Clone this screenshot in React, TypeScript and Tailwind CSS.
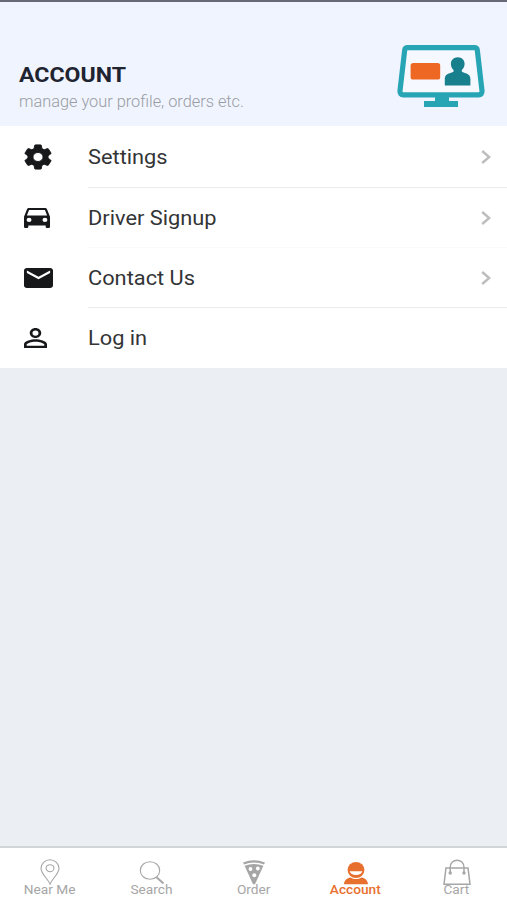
import type { ReactNode } from "react";

const MENU: { label: string; viewBox: string; size: string; path: string; arrow: boolean }[] = [
  {
    label: "Settings",
    viewBox: "2 1.7 20 20.6",
    size: "w-[28px] h-[26px] stroke-[#17181a] stroke-[0.7]",
    path: "M19.14 12.94c.04-.3.06-.61.06-.94 0-.32-.02-.64-.07-.94l2.03-1.58c.18-.14.23-.41.12-.61l-1.92-3.32c-.12-.22-.37-.29-.59-.22l-2.39.96c-.5-.38-1.03-.7-1.62-.94l-.36-2.54c-.04-.24-.24-.41-.48-.41h-3.84c-.24 0-.43.17-.47.41l-.36 2.54c-.59.24-1.13.57-1.62.94l-2.39-.96c-.22-.08-.47 0-.59.22L2.74 8.87c-.12.21-.08.47.12.61l2.03 1.58c-.05.3-.09.63-.09.94s.02.64.07.94l-2.03 1.58c-.18.14-.23.41-.12.61l1.92 3.32c.12.22.37.29.59.22l2.39-.96c.5.38 1.03.7 1.62.94l.36 2.54c.05.24.24.41.48.41h3.84c.24 0 .44-.17.47-.41l.36-2.54c.59-.24 1.13-.56 1.62-.94l2.39.96c.22.08.47 0 .59-.22l1.92-3.32c.12-.22.07-.47-.12-.61l-2.01-1.58zM12 15.6c-1.98 0-3.6-1.62-3.6-3.6s1.62-3.6 3.6-3.6 3.6 1.62 3.6 3.6-1.62 3.6-3.6 3.6z",
    arrow: true,
  },
  {
    label: "Driver Signup",
    viewBox: "3 5 18 16",
    size: "w-[26px] h-[20px]",
    path: "M18.92 6.01C18.72 5.42 18.16 5 17.5 5h-11c-.66 0-1.21.42-1.42 1.01L3 12v8c0 .55.45 1 1 1h1c.55 0 1-.45 1-1v-1h12v1c0 .55.45 1 1 1h1c.55 0 1-.45 1-1v-8l-2.08-5.99zM6.5 16.2a1.7 1.7 0 1 1 0-3.4 1.7 1.7 0 0 1 0 3.4zm11 0a1.7 1.7 0 1 1 0-3.4 1.7 1.7 0 0 1 0 3.4zM5 11l1.5-4.5h11L19 11H5z",
    arrow: true,
  },
  {
    label: "Contact Us",
    viewBox: "2 4 20 16",
    size: "w-[29px] h-[20px]",
    path: "M20 4H4c-1.1 0-1.99.9-1.99 2L2 18c0 1.1.9 2 2 2h16c1.1 0 2-.9 2-2V6c0-1.1-.9-2-2-2zm0 4l-8 5-8-5V6l8 5 8-5v2z",
    arrow: true,
  },
  {
    label: "Log in",
    viewBox: "4 4 16 16",
    size: "w-[23px] h-[20px]",
    path: "M12 5.9a2.1 2.1 0 1 1 0 4.2 2.1 2.1 0 0 1 0-4.2m0 9c2.97 0 6.1 1.46 6.1 2.1v1.1H5.9V17c0-.64 3.13-2.1 6.1-2.1M12 4C9.79 4 8 5.79 8 8s1.79 4 4 4 4-1.79 4-4-1.79-4-4-4zm0 9c-2.67 0-8 1.34-8 4v3h16v-3c0-2.66-5.33-4-8-4z",
    arrow: false,
  },
];

const TABS: { label: string; icon: ReactNode; active?: boolean }[] = [
  { label: "Near Me", icon: <PinIcon /> },
  { label: "Search", icon: <SearchIcon /> },
  { label: "Order", icon: <PizzaIcon /> },
  { label: "Account", icon: <AccountIcon />, active: true },
  { label: "Cart", icon: <BagIcon /> },
];

export default function App() {
  return (
    <div className="flex h-[900px] w-[507px] flex-col overflow-hidden bg-[#ebeef2] font-['Roboto',sans-serif]">
      <header className="flex h-[126px] shrink-0 justify-between border-t-2 border-[#676a76] bg-[#f0f4fe] pl-[19px] pr-[22px]">
        <div className="pt-[60px]">
          <h1 className="w-fit origin-left scale-x-[1.1] text-[21px] font-bold leading-[26px] text-[#202330]">
            ACCOUNT
          </h1>
          <p className="w-fit origin-left scale-x-[1.02] text-[16px] font-light leading-[27px] text-[#999ca4]">
            manage your profile, orders etc.
          </p>
        </div>
        <MonitorIcon />
      </header>

      <ul className="shrink-0 bg-white">
        {MENU.map((item, i) => (
          <li key={item.label} className={`flex items-stretch ${i === 0 ? "h-[62px]" : "h-[60px]"}`}>
            <div className="flex w-[88px] items-center pb-[1px] pl-[24px]">
              <svg
                viewBox={item.viewBox}
                preserveAspectRatio="none"
                className={`${item.size} fill-[#17181a]`}
              >
                <path d={item.path} />
              </svg>
            </div>
            <div
              className={`flex flex-1 items-center justify-between border-b pr-[16px] ${i === MENU.length - 1 ? "border-transparent" : i === 1 ? "border-[#fafafa]" : "border-[#ebebeb]"}`}
            >
              <span className="origin-left scale-x-[1.09] text-[20px] leading-[24px] text-[#333436]">
                {item.label}
              </span>
              {item.arrow && (
                <svg viewBox="0 0 10 14" className="mt-[1px] h-[14px] w-[10px]">
                  <path d="M1.2 1 8.2 7l-7 6" fill="none" stroke="#bdbdbd" strokeWidth="2.4" />
                </svg>
              )}
            </div>
          </li>
        ))}
      </ul>

      <nav className="mt-auto grid h-[54px] shrink-0 grid-cols-[100px_103px_102px_101px_1fr] border-t-2 border-[#d2d5d8] bg-white">
        {TABS.map((tab) => (
          <div
            key={tab.label}
            className={`flex flex-col items-center pt-[11px] ${tab.active ? "text-[#e8702f]" : "text-[#a6a6a6]"}`}
          >
            <div className="flex h-[26px] items-end">{tab.icon}</div>
            <span
              className={`-mt-[1px] scale-x-[1.14] text-[12px] leading-[12px] ${tab.active ? "font-medium" : ""}`}
            >
              {tab.label}
            </span>
          </div>
        ))}
      </nav>
    </div>
  );
}

function MonitorIcon() {
  return (
    <svg viewBox="0 0 88 64" className="mt-[42px] h-[64px] w-[88px]">
      <path
        d="M10.5 3.6h67q2.4 0 2.8 2.4L85 46.8q.3 4-3.4 4H6.4q-3.7 0-3.4-4L7.7 6q.4-2.4 2.8-2.4z"
        fill="#f5f8ff"
        stroke="#27a5b5"
        strokeWidth="5.2"
      />
      <path d="M38 52h14v5h9v6H27v-6h11z" fill="#27a5b5" />
      <rect x="13.6" y="19" width="29.6" height="16.6" rx="2.6" fill="#ee6723" />
      <path
        d="M60.8 13.2c4 0 6.8 2.8 6.8 6.6 0 2.6-1 4.8-2.8 6.2v1.6c1 1.6 8.6 1.6 8.6 7v6.8H47.8v-6.8c0-5.4 7.8-5.4 8.800-7V26c-1.800-1.400-2.700-3.600-2.700-6.200 0-3.800 2.900-6.600 6.900-6.600z"
        fill="#187f8d"
      />
    </svg>
  );
}

function PinIcon() {
  return (
    <svg viewBox="0 0 20 26" className="h-[26px] w-[20px]" fill="none" stroke="currentColor" strokeWidth="1.1">
      <path d="M10 25.2C8.5 20.5 1 15 1 9.3a9 8.5 0 0 1 18 0C19 15 11.5 20.5 10 25.2z" />
      <ellipse cx="10" cy="9.2" rx="3.9" ry="3.5" />
    </svg>
  );
}

function SearchIcon() {
  return (
    <svg viewBox="0 0 26 24" className="h-[24px] w-[26px]" fill="none" stroke="currentColor">
      <ellipse cx="11" cy="9.5" rx="9.7" ry="8.8" strokeWidth="1.1" />
      <path d="M17.5 16.2 24.5 22.5" strokeWidth="1.9" />
    </svg>
  );
}

function PizzaIcon() {
  return (
    <svg viewBox="0 0 24 26" className="h-[26px] w-[24px]">
      <path d="M1.5 4.5Q12 .2 22.5 4.5" fill="none" stroke="currentColor" strokeWidth="2.4" />
      <path d="M2.6 6.8Q12 3.2 21.4 6.8L13 25.3h-2z" fill="currentColor" />
      <circle cx="8.5" cy="10" r="1.9" fill="#fff" />
      <circle cx="15.8" cy="9.5" r="1.9" fill="#fff" />
      <circle cx="12.3" cy="16.3" r="2" fill="#fff" />
    </svg>
  );
}

function AccountIcon() {
  return (
    <svg viewBox="0 0 24 24" className="h-[24px] w-[24px]" fill="currentColor">
      <ellipse cx="12" cy="9" rx="8.4" ry="8" />
      <path d="M5.7 10.2h12.6a6.4 4.5 0 0 1-12.6 0z" fill="#fff" />
      <path d="M0 23.2c.3-4 3-6.2 6.7-6.7 3 2 7.6 2 10.6 0 3.7.5 6.4 2.7 6.7 6.7z" />
    </svg>
  );
}

function BagIcon() {
  return (
    <svg viewBox="0 0 28 26" className="h-[26px] w-[28px]" fill="none" stroke="currentColor" strokeWidth="1.5">
      <path d="M3 9h22l2 16.2H1z" />
      <path d="M7.2 14V8.5C7.2-1.2 21-1.2 21 8.5V14" />
      <circle cx="7.2" cy="14" r="1.7" fill="currentColor" stroke="none" />
      <circle cx="21" cy="14" r="1.7" fill="currentColor" stroke="none" />
    </svg>
  );
}
